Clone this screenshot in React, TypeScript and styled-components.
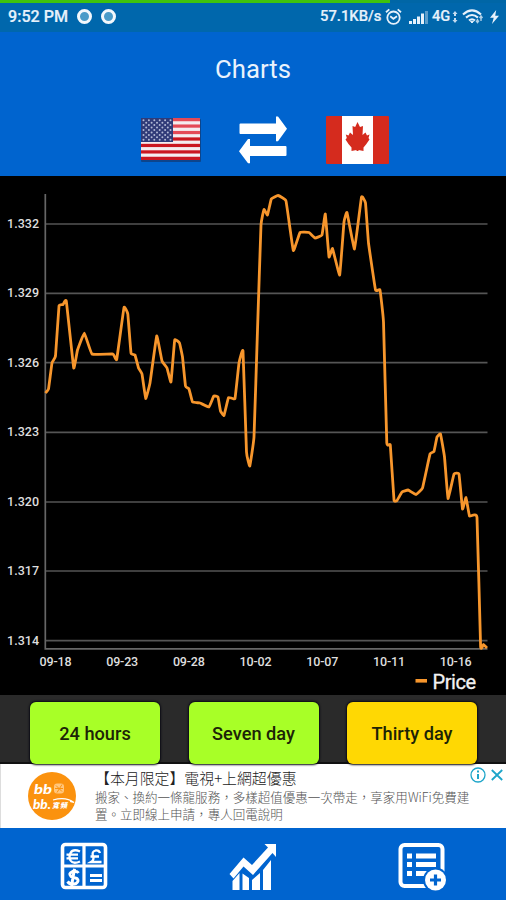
import React from 'react';
import styled, { createGlobalStyle } from 'styled-components';

const BLUE = '#0064cf';

const GlobalStyle = createGlobalStyle`
  * { box-sizing: border-box; }
  body { margin: 0; background: #000; font-family: Roboto, 'Noto Sans CJK TC', sans-serif; }
  svg { display: block; flex: none; }
`;

const Screen = styled.div`
  width: 506px;
  height: 900px;
  display: flex;
  flex-direction: column;
  overflow: hidden;
`;

const LoadTrack = styled.div`
  height: 3px;
  flex: none;
  background: #0066a6;
`;

const LoadBar = styled.div`
  width: 390px;
  height: 3px;
  background: #3fc30c;
`;

const StatusBar = styled.div`
  height: 29px;
  flex: none;
  display: flex;
  align-items: flex-start;
  justify-content: space-between;
  padding: 4px 7px 0 8px;
  background: #0067ac;
  color: #e6f1fb;
`;

const StatusGroup = styled.div<{ $gap: number }>`
  display: flex;
  align-items: center;
  height: 19px;
  gap: ${p => p.$gap}px;
`;

const StatusText = styled.span<{ $size: number; $width: number }>`
  font-size: ${p => p.$size}px;
  font-weight: 500;
  width: ${p => p.$width}px;
  line-height: 19px;
  white-space: nowrap;
  -webkit-text-stroke: 0.2px #e6f1fb;
`;

const Dot = styled.i`
  width: 15px;
  height: 15px;
  border-radius: 50%;
  border: 3.5px solid #f2f7fc;
  background: #4a9bc9;
`;

const Header = styled.header`
  height: 144px;
  flex: none;
  background: ${BLUE};
  display: flex;
  flex-direction: column;
  align-items: center;
`;

const Title = styled.h1`
  margin: 21px 0 0;
  font-size: 25.7px;
  line-height: 32px;
  font-weight: 400;
  color: #eaf2fc;
`;

const Pair = styled.div`
  display: flex;
  align-items: center;
  justify-content: space-between;
  width: 249px;
  height: 48px;
  margin: 31px 0 0 22px;
`;

const ChartPanel = styled.section`
  height: 519px;
  flex: none;
  background: #000;
`;

const AxisText = styled.text`
  font-family: Roboto, sans-serif;
  font-size: 12.5px;
  font-weight: 500;
  fill: #dedede;
`;

const LegendText = styled.text`
  font-family: Roboto, sans-serif;
  font-size: 20px;
  fill: #f2f2f2;
  stroke: #f2f2f2;
  stroke-width: 0.3px;
`;

const RangeBar = styled.div`
  height: 69px;
  flex: none;
  background: #2a2a2a;
  border-bottom: 2px solid #111;
  display: flex;
  gap: 28.5px;
  padding: 7px 0 0 30px;
`;

const RangeButton = styled.button<{ $active?: boolean }>`
  width: 130px;
  height: 62px;
  flex: none;
  padding: 0 0 0;
  border: 0;
  border-radius: 6px;
  background: ${p => (p.$active ? '#ffd803' : '#a8ff27')};
  box-shadow: 0 0 2px 1px #0a0a14;
  color: #1c2406;
  font: 500 18.2px Roboto, sans-serif;
  position: relative;
  z-index: 1;
`;

const Ad = styled.aside`
  height: 64px;
  flex: none;
  background: #fff;
  display: flex;
  border-left: 1px solid #ddd;
`;

const AdLogo = styled.div`
  margin: 8px 0 0 27px;
  width: 48px;
  height: 48px;
  flex: none;
`;

const AdCopy = styled.div`
  margin-left: 19px;
  width: 375px;
  flex: none;
  padding-top: 3px;
  white-space: nowrap;
  font-family: 'Noto Sans CJK TC', sans-serif;
`;

const AdTitle = styled.div`
  font-size: 14.9px;
  line-height: 22px;
  font-weight: 300;
  color: #222;
`;

const AdLine = styled.div`
  font-size: 12.53px;
  line-height: 16.5px;
  font-weight: 300;
  color: #555;
`;

const AdControls = styled.div`
  display: flex;
  gap: 5px;
  padding-top: 3px;
  height: 20px;
`;

const Nav = styled.nav`
  height: 72px;
  flex: none;
  background: ${BLUE};
  display: grid;
  grid-template-columns: repeat(3, 1fr);
  justify-items: center;
  padding-top: 14px;
`;

const pricePoints: [number, number][] = [
  [45.5, 393], [48.5, 389], [52, 363], [55.5, 356], [59, 306], [63, 304.5], [66.3, 301], [73.7, 368],
  [77.5, 350], [84.3, 333], [92, 354], [113, 354], [116.7, 359.5], [124, 307.5], [127.8, 314], [131, 353], [135, 355],
  [138.5, 368], [142, 374], [145.7, 398.5], [150, 383], [156.7, 336], [162, 361], [167, 368], [171, 382],
  [174.7, 340], [179.5, 343], [182.5, 357], [185.5, 386], [189, 389], [192.5, 402], [200, 403], [209, 407], [213.8, 396],
  [218, 397], [220.5, 411], [224, 415.5], [228.5, 397.5], [235, 398.5], [239, 363], [243, 351], [246.5, 452],
  [249.8, 466], [254, 437], [257.5, 330], [261, 225], [264, 209.5], [267.5, 215], [271.3, 199], [278, 195.5],
  [286, 201], [293.3, 250.5], [300, 232.5], [309, 232.5], [315, 238], [322, 235], [325.3, 214], [329, 257],
  [332.5, 248.5], [339.7, 275], [344, 222], [347, 212.5], [354.5, 249], [361.5, 197], [365.5, 203],
  [368.5, 243], [375.5, 290], [380, 290], [383.5, 322], [386.8, 443], [390.3, 445], [394, 500], [397, 500.5], [402, 492],
  [408, 490], [416, 494.5], [422.5, 488], [430, 454], [434, 451.5], [437, 437], [440.5, 434], [444.5, 457],
  [448, 498.5], [454, 474], [459, 474], [462.5, 509], [466, 497.5], [469.5, 516], [477, 517.5], [480.6, 646.5], [483.5, 644.5], [487, 648],
];

const round = (n: number) => n.toFixed(2);

function smoothPath(points: [number, number][], tension = 0.04) {
  return points.reduce((d, [x, y], i) => {
    if (i === 0) return `M${x},${y}`;
    const [px, py] = points[i - 1];
    const [ax, ay] = points[Math.max(0, i - 2)];
    const [nx, ny] = points[Math.min(points.length - 1, i + 1)];
    return `${d}C${round(px + (x - ax) * tension)},${round(py + (y - ay) * tension)} ${round(x - (nx - px) * tension)},${round(y - (ny - py) * tension)} ${x},${y}`;
  }, '');
}

const priceTicks = [
  { label: '1.332', y: 224 }, { label: '1.329', y: 293.3 }, { label: '1.326', y: 362.7 },
  { label: '1.323', y: 432.3 }, { label: '1.320', y: 502 }, { label: '1.317', y: 571 }, { label: '1.314', y: 640.7 },
];
const dateTicks = ['09-18', '09-23', '09-28', '10-02', '10-07', '10-11', '10-16'];

const PriceChart = () => (
  <svg width="506" height="519" viewBox="0 176 506 519">
    {priceTicks.map(({ label, y }) => (
      <g key={label}>
        <path d={`M45 ${y}H487.5`} stroke="#555" strokeWidth="1.7" />
        <AxisText x="7" y={y + 4} textLength="32">{label}</AxisText>
      </g>
    ))}
    <path d="M45.3 194V648.8H487.5" fill="none" stroke="#666" strokeWidth="1.7" />
    {dateTicks.map((label, i) => (
      <AxisText key={label} x={39.5 + i * 66.7} y="666" textLength="32">{label}</AxisText>
    ))}
    <path d={smoothPath(pricePoints)} fill="none" stroke="#f7962c" strokeWidth="2.8" strokeLinejoin="round" />
    <path d="M415.5 680.8H427" stroke="#f7962c" strokeWidth="3.6" />
    <LegendText x="432.5" y="688.5" textLength="43.5">Price</LegendText>
  </svg>
);

const AlarmIcon = () => (
  <svg width="17" height="18" viewBox="0 0 17 18" fill="none" stroke="currentColor" strokeWidth="1.8">
    <circle cx="8.5" cy="9.7" r="6.2" />
    <path d="M1 4.3L4.3 1.4M16 4.3L12.7 1.4M5.2 8.3L8.4 10.8L12 8.3" />
  </svg>
);

const SignalIcon = () => (
  <svg width="19" height="14" viewBox="0 0 19 14" fill="currentColor">
    <path d="M0 11h3v3H0zM4 9h3v5H4zM8 6.5h3V14H8zM12 3.5h3V14h-3z" />
    <path d="M16 1h3v13h-3z" opacity=".4" />
  </svg>
);

const DataIcon = () => (
  <svg width="6" height="14" viewBox="0 0 6 14" fill="currentColor">
    <path d="M3 1l2.500 3H4V6H2V4H.5zM3 13l2.500-3H4V8H2v2H.5z" opacity=".85" />
  </svg>
);

const WifiIcon = () => (
  <svg width="22" height="15" viewBox="0 0 22 15" fill="none" stroke="currentColor" strokeWidth="2.1">
    <path d="M1 5.500Q10 -2.600 19 5.500M4 8.600Q10 3.400 16 8.600M7 11.500Q10 9 13 11.500" />
    <path d="M8.500 12.300h3L10 14z" fill="currentColor" strokeWidth="1" />
    <path d="M15.500 14V10M19 7v5M14 11.600l1.500 2 1.500-2M17.500 9L19 7l1.500 2" strokeWidth="1.400" opacity=".75" />
  </svg>
);

const BoltIcon = () => (
  <svg width="9" height="14" viewBox="0 0 9 14" fill="currentColor">
    <path d="M6.200 0L0 7.800h3.700L2 14l7-8.300H5.200z" />
  </svg>
);

const stripes = [0, 1, 2, 3, 4, 5, 6];
const UsFlag = () => (
  <svg width="61" height="44" viewBox="0 0 61 44">
    <rect x="1" y="1" width="60" height="43" rx="1" fill="#12386f" opacity=".7" />
    <rect x="1" width="59" height="42" fill="#f4edf0" />
    {stripes.map(i => (
      <rect key={i} x="1" y={i * 6.46} width="59" height="3.23" fill={i < 3 ? '#e44a57' : '#ca1720'} />
    ))}
    <rect x="1" width="32" height="24" fill="#303b78" />
    {Array.from({ length: 9 }, (_, r) =>
      Array.from({ length: r % 2 ? 5 : 6 }, (_, c) => (
        <circle key={`${r}-${c}`} cx={3.5 + (r % 2 ? 2.7 : 0) + c * 5.4} cy={2.2 + r * 2.45} r="1" fill="#b3bad6" />
      ))
    )}
  </svg>
);

const SwapIcon = () => (
  <svg width="48" height="48" viewBox="0 0 48 48" fill="#fff">
    <path d="M1.500 7.500H37V.5h2L48 12.700L39 25.300h-2V18H1.500Q.5 18 .5 17V8.500Q.5 7.500 1.500 7.500z" />
    <path d="M46.500 30H11V23H9L0 35.300L9 47.300h2V40H46.500Q47.500 40 47.500 39V31Q47.500 30 46.500 30z" />
  </svg>
);

const CanadaFlag = () => (
  <svg width="63" height="48" viewBox="0 0 63 48">
    <rect width="63" height="48" rx="1" fill="#d52b1e" />
    <rect x="16" width="31" height="48" fill="#fff" />
    <path fill="#d52b1e" d="M31.500 6L34 11L37 10L36.500 19L39.500 16.500L41 19.500L43.500 18.500L42.500 22L43.500 23.500L40 28.500L37.500 31.500V35L32.500 34V35h-2V34L25.500 35V31.500L22.500 28L19.500 23.500L20.800 22L19.800 18.500L22.500 19.500L24 16.500L27 19L26.500 10L29.200 11z" />
  </svg>
);

const CurrencyIcon = () => (
  <svg width="48" height="48" viewBox="0 0 48 48">
    <rect x="2.500" y="2.500" width="43" height="43" rx="3" fill="none" stroke="#fff" strokeWidth="3.600" />
    <path d="M24 3V45M3 24H45" stroke="#fff" strokeWidth="3.200" />
    <g fill="none" stroke="#fff" strokeWidth="2.300">
      <path d="M20 9.500Q13 6.500 10.500 11Q8.500 15 10.500 18.500Q13 22.500 20 19.500M6.500 12.700H18M6.500 16.300H18" />
      <path d="M40 11Q39 8 35.500 8.500Q31.500 9.500 33 14Q34.500 18 31 20H41.500M30.500 14.500H39" />
      <path d="M18.500 31Q17 28.500 12.500 29.500Q8 31.500 11 34.500L17 36.500Q19.500 39 16 41.500Q10.500 43.500 7.500 39.500M14.500 26.800L11.500 44" strokeWidth="3" />
      <path d="M30 33.500H42M30 38.500H42" strokeWidth="3" />
    </g>
  </svg>
);

const TrendIcon = () => (
  <svg width="48" height="48" viewBox="0 0 48 48" fill="#fff">
    <path d="M.5 32L14.500 15.500L23 23L39 5.500L35.500 2H47V15L43.500 11L24 33L14.500 24.500L4.500 36.500z" />
    <path d="M3.500 39L10.500 31V48h-7zM13.500 31.500L20 36V48h-6.500zM23 38L31 31V48h-8zM34 28L42 18V48h-8z" />
  </svg>
);

const ListAddIcon = () => (
  <svg width="50" height="50" viewBox="0 0 50 50">
    <rect x="3.500" y="3" width="42" height="41" rx="4" fill="none" stroke="#fff" strokeWidth="4" />
    <path d="M10 11.500h5v5h-5zM10 20h5v5h-5zM10 29h5v5h-5zM19 11.500h20v5H19zM19 20h20v5H19zM19 29h15v5H19z" fill="#fff" />
    <circle cx="38.500" cy="38" r="12.500" fill={BLUE} />
    <circle cx="38.500" cy="38" r="10.500" fill="#fff" />
    <path d="M38.500 32.500v11M33 38h11" stroke={BLUE} strokeWidth="3.200" />
  </svg>
);

const BrandText = styled.text`
  font-family: Lato, 'Noto Sans CJK TC', sans-serif;
  font-weight: 900;
  font-style: italic;
  fill: #fff;
`;

const BrandIcon = () => (
  <svg width="48" height="48" viewBox="0 0 48 48">
    <circle cx="24" cy="24" r="24" fill="#fb920e" />
    <BrandText x="6" y="21.500" fontSize="13.500" textLength="18" lengthAdjust="spacingAndGlyphs">bb</BrandText>
    <rect x="26" y="11.500" width="10" height="10" rx="3" fill="#ffc77e" />
    <path d="M28 13.500l6 6M34 12.500l-5 8M27 16.500h8" stroke="#fb920e" strokeWidth="1" />
    <BrandText x="5" y="36.500" fontSize="12.500" textLength="18" lengthAdjust="spacingAndGlyphs">bb.</BrandText>
    <BrandText x="24" y="36" fontSize="7" textLength="15">寬頻</BrandText>
    <path d="M25 28Q38 24.500 46 30.500l-4-1" fill="none" stroke="#fff" strokeWidth="1.200" />
  </svg>
);

const App = () => (
  <>
    <GlobalStyle />
    <Screen>
      <LoadTrack><LoadBar /></LoadTrack>
      <StatusBar>
        <StatusGroup $gap={8.5}>
          <StatusText $size={16.1} $width={60.5}>9:52 PM</StatusText>
          <Dot /><Dot />
        </StatusGroup>
        <StatusGroup $gap={4}>
          <StatusText $size={14.8} $width={61}>57.1KB/s</StatusText>
          <AlarmIcon />
          <StatusGroup $gap={3}><i /><SignalIcon /></StatusGroup>
          <StatusGroup $gap={1}><StatusText $size={14.6} $width={19}>4G</StatusText><DataIcon /></StatusGroup>
          <WifiIcon />
          <StatusGroup $gap={2}><i /><BoltIcon /></StatusGroup>
        </StatusGroup>
      </StatusBar>
      <Header>
        <Title>Charts</Title>
        <Pair><UsFlag /><SwapIcon /><CanadaFlag /></Pair>
      </Header>
      <ChartPanel><PriceChart /></ChartPanel>
      <RangeBar>
        <RangeButton>24 hours</RangeButton>
        <RangeButton>Seven day</RangeButton>
        <RangeButton $active>Thirty day</RangeButton>
      </RangeBar>
      <Ad>
        <AdLogo><BrandIcon /></AdLogo>
        <AdCopy>
          <AdTitle>【本月限定】電視+上網超優惠</AdTitle>
          <AdLine>搬家、換約一條龍服務，多樣超值優惠一次帶走，享家用WiFi免費建</AdLine>
          <AdLine>置。立即線上申請，專人回電說明</AdLine>
        </AdCopy>
        <AdControls>
          <svg width="16" height="16" viewBox="0 0 16 16" fill="none" stroke="#1da5c9" strokeWidth="1.300">
            <circle cx="8" cy="8" r="7" /><path d="M8 3.500v2M8 7v5" strokeWidth="2" />
          </svg>
          <svg width="12" height="16" viewBox="0 0 12 16" stroke="#1da5c9" strokeWidth="1.800"><path d="M.8 3L11.200 13M11.200 3L.8 13" /></svg>
        </AdControls>
      </Ad>
      <Nav><CurrencyIcon /><TrendIcon /><ListAddIcon /></Nav>
    </Screen>
  </>
);

export default App;
